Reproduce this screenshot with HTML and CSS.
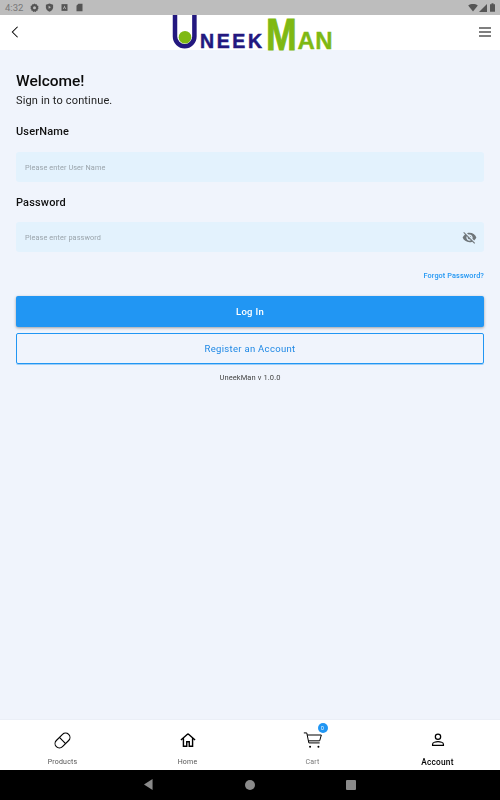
FILE: index.html
```html
<!DOCTYPE html>
<html lang="en">
<head>
<meta charset="utf-8">
<title>UneekMan</title>
<link rel="stylesheet" href="styles.css">
</head>
<body>
<div class="screen">
  <div class="status">
    <div class="status-left">
      <span class="time">4:32</span>
      <svg class="si" viewBox="0 0 12 12"><path d="M6 .5l1.2 1.3 1.8-.3.5 1.8 1.8.6-.5 1.8L11.500 7l-1.300 1.200.2 1.800-1.800.4L7.800 12 6 11.300 4.200 12l-.8-1.600-1.800-.4.2-1.800L.5 7l.7-1.300-.5-1.800 1.800-.6.5-1.800 1.800.3z" fill="#555"/><circle cx="6" cy="6.200" r="2" fill="#bdbdbd"/></svg>
      <svg class="si" viewBox="0 0 12 12"><path d="M6 .5l4.800 1.700v3.600c0 2.900-2 5-4.800 5.900C3.200 10.800 1.200 8.700 1.200 5.800V2.200z" fill="#555"/><path d="M4.800 3.800l3 2-3 2z" fill="#bdbdbd"/></svg>
      <svg class="si" viewBox="0 0 12 12"><path d="M2 1.500h8v9H2z" fill="#555"/><path d="M6 3.200L8 8H7L6 5.500 5 8H4z" fill="#bdbdbd"/></svg>
      <svg class="si" viewBox="0 0 12 12"><path d="M4.500 1H10v10H2V3.500z" fill="#555"/></svg>
    </div>
    <div class="status-right">
      <svg class="wifi" viewBox="0 0 12 10"><path d="M0 1.800C3.500-.6 8.500-.6 12 1.800L6 9.500z" fill="#555"/></svg>
      <svg class="signal" viewBox="0 0 9 9"><path d="M0 9L9 0v9z" fill="#555"/></svg>
      <svg class="batt" viewBox="0 0 6 10"><path d="M1.800 0h2.400v1H6v9H0V1h1.800z" fill="#555"/></svg>
    </div>
  </div>

  <header class="appbar">
    <svg class="back" viewBox="0 0 10 16"><path d="M8 2L2 8l6 6" fill="none" stroke="#000" stroke-width="1.200"/></svg>
    <div class="logo">
      <svg class="logo-u" viewBox="0 0 25 34"><path d="M3 0v21.500a9.700 9.700 0 0 0 19.400 0V0" fill="none" stroke="#23187f" stroke-width="4.500"/><circle cx="13" cy="22.300" r="6.300" fill="#7fb913"/></svg>
      <span class="logo-navy">NEEK</span>
      <span class="logo-m">M</span>
      <span class="logo-green">AN</span>
    </div>
    <svg class="menu" viewBox="0 0 12 10"><path d="M0 1h12M0 5h12M0 9h12" stroke="#000" stroke-width="1.200"/></svg>
  </header>

  <main class="content">
    <h1 class="title">Welcome!</h1>
    <p class="subtitle">Sign in to continue.</p>
    <label class="label first">UserName</label>
    <div class="field field-user"><span class="placeholder">Please enter User Name</span></div>
    <label class="label second">Password</label>
    <div class="field field-pass">
      <span class="placeholder">Please enter password</span>
      <svg class="eye" viewBox="0 0 24 24"><path d="M12 7c2.760 0 5 2.240 5 5 0 .65-.13 1.260-.36 1.830l2.920 2.920c1.510-1.260 2.700-2.890 3.430-4.750-1.730-4.390-6-7.500-11-7.500-1.400 0-2.740.25-3.980.7l2.160 2.160C10.740 7.130 11.350 7 12 7zM2 4.270l2.280 2.280.46.46C3.080 8.300 1.780 10.020 1 12c1.730 4.390 6 7.500 11 7.500 1.550 0 3.030-.3 4.380-.84l.42.42L19.730 22 21 20.730 3.270 3 2 4.270zM7.530 9.800l1.550 1.550c-.05.21-.08.43-.08.65 0 1.660 1.340 3 3 3 .22 0 .44-.03.65-.08l1.550 1.550c-.67.33-1.410.53-2.200.53-2.760 0-5-2.240-5-5 0-.79.2-1.530.53-2.200zm4.310-.78l3.150 3.150.02-.16c0-1.660-1.340-3-3-3l-.17.01z" fill="#6f767a"/></svg>
    </div>
    <div class="forgot-row"><a class="forgot">Forgot Password?</a></div>
    <button class="btn primary">Log In</button>
    <button class="btn outline">Register an Account</button>
    <p class="version">UneekMan v 1.0.0</p>
  </main>

  <nav class="tabs">
    <div class="tab">
      <div class="tab-icon"><svg class="ic pill" viewBox="0 0 24 24"><g transform="rotate(-45 12 12)" fill="none" stroke="#000" stroke-width="1.400"><rect x="1" y="6.500" width="22" height="11" rx="5.500"/><path d="M12 6.500v11"/></g></svg></div>
      <span class="tab-label">Products</span>
    </div>
    <div class="tab">
      <div class="tab-icon"><svg class="ic" viewBox="0 0 24 24"><path d="M12 4.500L3.500 12M12 4.500l8.500 7.500M6.500 10v9.500h4V14h3v5.500h4V10" fill="none" stroke="#000" stroke-width="1.700"/></svg></div>
      <span class="tab-label">Home</span>
    </div>
    <div class="tab">
      <div class="tab-icon">
        <svg class="ic" viewBox="0 0 24 24"><path d="M1 3.500h3.500L7 15.500h13M5 6h17l-2 7H6.500" fill="none" stroke="#000" stroke-width="1.200"/><circle cx="8.500" cy="20" r="1.200"/><circle cx="18.500" cy="20" r="1.200"/></svg>
        <span class="badge">0</span>
      </div>
      <span class="tab-label muted">Cart</span>
    </div>
    <div class="tab">
      <div class="tab-icon"><svg class="ic" viewBox="0 0 24 24"><circle cx="12" cy="8" r="3.200" fill="none" stroke="#000" stroke-width="1.500"/><path d="M5.500 18.500v-1.500c0-2 4-3 6.500-3s6.500 1 6.500 3v1.500z" fill="none" stroke="#000" stroke-width="1.500"/></svg></div>
      <span class="tab-label active">Account</span>
    </div>
  </nav>

  <div class="sysnav">
    <svg class="nav-back" viewBox="0 0 10 12"><path d="M9.500 0v12L0 6z" fill="#8a8a8a"/></svg>
    <span class="nav-home"></span>
    <span class="nav-recent"></span>
  </div>
</div>
</body>
</html>
```

FILE: styles.css
```css
* { box-sizing: border-box; }
html, body { margin: 0; padding: 0; }
body { font-family: Roboto, "Liberation Sans", sans-serif; }
.screen { width: 500px; height: 800px; display: flex; flex-direction: column; background: #f0f4fc; overflow: hidden; }

.status { height: 15px; flex: none; background: #bdbdbd; display: flex; justify-content: space-between; align-items: center; padding: 0 5px; }
.status-left, .status-right { display: flex; align-items: center; }
.time { font-size: 9.500px; color: #777; width: 24.500px; }
.si { width: 9px; height: 9px; margin-right: 6px; }
.wifi { width: 10px; height: 8px; margin-right: 1px; }
.signal { width: 8px; height: 8px; margin-right: 3px; }
.batt { width: 5px; height: 9px; }

.appbar { height: 35px; flex: none; background: #fff; display: flex; align-items: center; justify-content: space-between; padding: 0 9px 0 10px; position: relative; }
.back { width: 10px; height: 14px; margin-top: -1px; }
.menu { width: 12px; height: 10px; margin-top: -1px; }
.logo { position: absolute; left: 172px; top: 0; height: 34px; display: flex; align-items: flex-end; width: 162px; font-family: "Liberation Sans", sans-serif; font-weight: 700; line-height: 1; }
.logo-u { width: 25px; height: 34px; flex: none; }
.logo-navy { font-size: 19.500px; letter-spacing: 2.600px; color: #23187f; margin: 0 0 -2px 3px; line-height: 20px; -webkit-text-stroke: .5px #23187f; }
.logo-m { font-size: 45px; color: #7fb913; margin: 0 0 -2px 1px; line-height: 32px; height: 32px; transform: scaleX(.82); transform-origin: left bottom; width: 31px; -webkit-text-stroke: 1px #7fb913; }
.logo-green { font-size: 24px; letter-spacing: .4px; color: #7fb913; line-height: 21px; margin: 0 0 -2px 1px; -webkit-text-stroke: .4px #7fb913; }

.content { flex: 1; padding: 22px 16px 0; display: flex; flex-direction: column; will-change: transform; }
.title { margin: 0; font-size: 15.500px; line-height: 19px; font-weight: 500; color: #0b0b0b; }
.subtitle { margin: 1px 0 0; font-size: 11px; line-height: 17px; color: #222; letter-spacing: .15px; }
.label { display: block; font-size: 11px; line-height: 14px; font-weight: 500; color: #111; letter-spacing: .15px; }
.label.first { margin-top: 16px; }
.label.second { margin-top: 14px; }
.field { height: 30px; border-radius: 3px; background: #e3f2fd; display: flex; align-items: center; justify-content: space-between; padding: 0 7px 0 9px; }
.field-user { margin-top: 13px; }
.field-pass { margin-top: 12px; }
.placeholder { font-size: 7.300px; color: #9aa4ab; letter-spacing: .1px; }
.eye { width: 15px; height: 15px; }
.forgot-row { display: flex; justify-content: flex-end; margin-top: 18px; height: 11px; }
.forgot { font-size: 7.300px; line-height: 11px; font-weight: 500; color: #2196f3; letter-spacing: .1px; }
.btn { display: block; width: 100%; height: 31px; border-radius: 2px; font-family: inherit; font-size: 9.500px; font-weight: 500; letter-spacing: .3px; padding: 0; }
.btn.primary { margin-top: 15px; background: #2196f3; border: 0; color: #fff; box-shadow: 0 1px 3px rgba(0,0,0,.35); }
.btn.outline { margin-top: 6px; background: transparent; border: 1px solid #2196f3; color: #1e88e5; font-weight: 400; letter-spacing: .3px; box-shadow: 0 1px 0 rgba(33,150,243,.4); }
.version { margin: 9px 0 0; text-align: center; font-size: 7.500px; line-height: 10px; color: #444; letter-spacing: .1px; }

.tabs { height: 50px; flex: none; background: #fff; display: grid; grid-template-columns: repeat(4, 1fr); box-shadow: 0 -1px 1px rgba(0,0,0,.02); }
.tab { display: flex; flex-direction: column; align-items: center; will-change: transform; }
.tab-icon { position: relative; height: 24px; margin-top: 10px; }
.ic { display: block; width: 20px; height: 20px; }
.pill { width: 19px; height: 19px; margin-top: 1px; }
.badge { position: absolute; right: -5px; top: -7px; width: 10px; height: 10px; border-radius: 50%; background: #2196f3; color: #fff; font-size: 5px; line-height: 10px; text-align: center; }
.tab-label { margin-top: 3px; font-size: 7px; line-height: 10px; color: #555; letter-spacing: .2px; font-weight: 400; }
.tab-label.muted { color: #777; }
.tab-label.active { color: #000; font-size: 8.300px; font-weight: 500; }

.sysnav { height: 30px; flex: none; background: #000; position: relative; }
.nav-back { position: absolute; left: 144px; top: 9px; width: 9px; height: 11px; }
.nav-home { position: absolute; left: 245px; top: 10px; width: 10px; height: 10px; border-radius: 50%; background: #8a8a8a; }
.nav-recent { position: absolute; left: 346px; top: 10px; width: 10px; height: 10px; border-radius: 1px; background: #8a8a8a; }
```
